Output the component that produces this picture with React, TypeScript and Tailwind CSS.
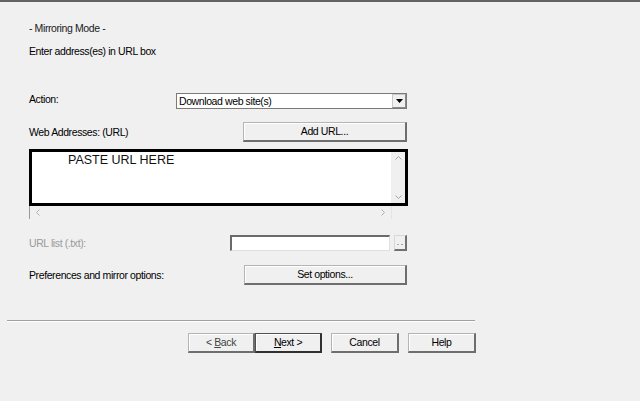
import React from "react";

const font = { fontFamily: '"Liberation Sans", Arial, sans-serif' };

function Btn({ children, w, def }: { children: React.ReactNode; w: string; def?: boolean }) {
  return (
    <div
      className={
        "h-[20px] flex items-center justify-center text-black bg-[#f0f0f0] shadow-[inset_1px_1px_0_#ffffff] " +
        w +
        (def
          ? " border border-[#505050] border-r-2 border-b-2 border-r-[#303030] border-b-[#303030]"
          : " border border-[#b4b4b4] border-r-2 border-b-2 border-r-[#6e6e6e] border-b-[#6e6e6e]")
      }
    >
      {children}
    </div>
  );
}

export default function App() {
  return (
    <div
      className="w-[640px] h-[401px] bg-[#f0f0f0] border-t-2 border-[#646464] overflow-hidden text-[10.5px] tracking-[-0.4px] leading-[13px] text-black"
      style={font}
    >
      <div className="pl-[29px] pt-[20px] flex flex-col">
        <div className="text-[#1a1a1a]">- Mirroring Mode -</div>
        <div className="mt-[10px]">Enter address(es) in URL box</div>

        <div className="mt-[35px] flex items-center h-[16px]">
          <div className="w-[147px] -mt-[3px]">Action:</div>
          <div className="w-[231px] h-[16px] border border-[#7a7a7a] bg-white flex items-center">
            <div className="flex-1 pl-[2px] leading-[12px]">Download web site(s)</div>
            <div className="w-[14px] h-[14px] bg-[#f0f0f0] border border-[#c8c8c8] border-r-[#8a8a8a] border-b-[#8a8a8a] flex items-center justify-center">
              <svg width="7" height="4" viewBox="0 0 7 4">
                <path d="M0 0h7L3.5 4z" fill="#000" />
              </svg>
            </div>
          </div>
        </div>

        <div className="mt-[13px] flex items-center h-[20px]">
          <div className="w-[214px]">Web Addresses: (URL)</div>
          <Btn w="w-[164px]">Add URL...</Btn>
        </div>

        <div className="mt-[7px] w-[379px]">
          <div className="h-[57px] border-[3px] border-black bg-white flex">
            <div className="flex-1 pl-[36px] pt-[1px] text-[12.5px] tracking-normal leading-[15px] text-[#111]">PASTE URL HERE</div>
            <div className="w-[14px] bg-[#f0f0f0] flex flex-col items-center justify-between py-[4px] text-[#a0a0a0]">
              <svg width="7" height="4" viewBox="0 0 7 4">
                <path d="M0.5 3.5L3.5 0.5L6.5 3.5" stroke="#a6a6a6" fill="none" />
              </svg>
              <svg width="7" height="4" viewBox="0 0 7 4">
                <path d="M0.5 0.5L3.5 3.5L6.5 0.5" stroke="#a6a6a6" fill="none" />
              </svg>
            </div>
          </div>
          <div className="h-[13px] flex border-l border-[#9a9a9a]">
            <div className="w-[362px] bg-[#f0f0f0] flex items-center justify-between px-[6px] border-r border-[#e4e4e4]">
              <svg width="4" height="7" viewBox="0 0 4 7">
                <path d="M3.5 0.5L0.5 3.5L3.5 6.5" stroke="#b0b0b0" fill="none" />
              </svg>
              <svg width="4" height="7" viewBox="0 0 4 7">
                <path d="M0.5 0.5L3.5 3.5L0.5 6.5" stroke="#b0b0b0" fill="none" />
              </svg>
            </div>
            <div className="flex-1 bg-[#f0f0f0]" />
          </div>
        </div>

        <div className="mt-[16px] flex items-center h-[16px]">
          <div className="w-[201px] text-[#9a9a9a]">URL list (.txt):</div>
          <div className="w-[160px] h-[16px] bg-white border border-[#e0e0e0] border-t-2 border-l-2 border-t-[#6a6a6a] border-l-[#6a6a6a]" />
          <div className="ml-[4px] w-[13px] h-[16px] bg-[#f0f0f0] border border-[#d8d8d8] border-r-2 border-b-2 border-r-[#707070] border-b-[#707070] flex items-center justify-center gap-[2px] pt-[3px]">
            <div className="w-[2px] h-[1px] bg-[#c8b090]" />
            <div className="w-[2px] h-[1px] bg-[#80b0d0]" />
          </div>
        </div>

        <div className="mt-[14px] flex items-center h-[20px]">
          <div className="w-[215px]">Preferences and mirror options:</div>
          <Btn w="w-[163px]">Set options...</Btn>
        </div>
      </div>

      <div className="mt-[35px] ml-[7px] w-[468px] h-[2px] border-t border-[#a0a0a0] border-b border-b-white" />

      <div className="mt-[11px] ml-[188px] flex">
        <Btn w="w-[67px]">
          <span className="text-[#444]">
            &lt; <span className="underline">B</span>ack
          </span>
        </Btn>
        <Btn w="w-[67px]" def>
          <span>
            <span className="underline">N</span>ext &gt;
          </span>
        </Btn>
        <div className="w-[9px]" />
        <Btn w="w-[68px]">Cancel</Btn>
        <div className="w-[9px]" />
        <Btn w="w-[68px]">Help</Btn>
      </div>
    </div>
  );
}
